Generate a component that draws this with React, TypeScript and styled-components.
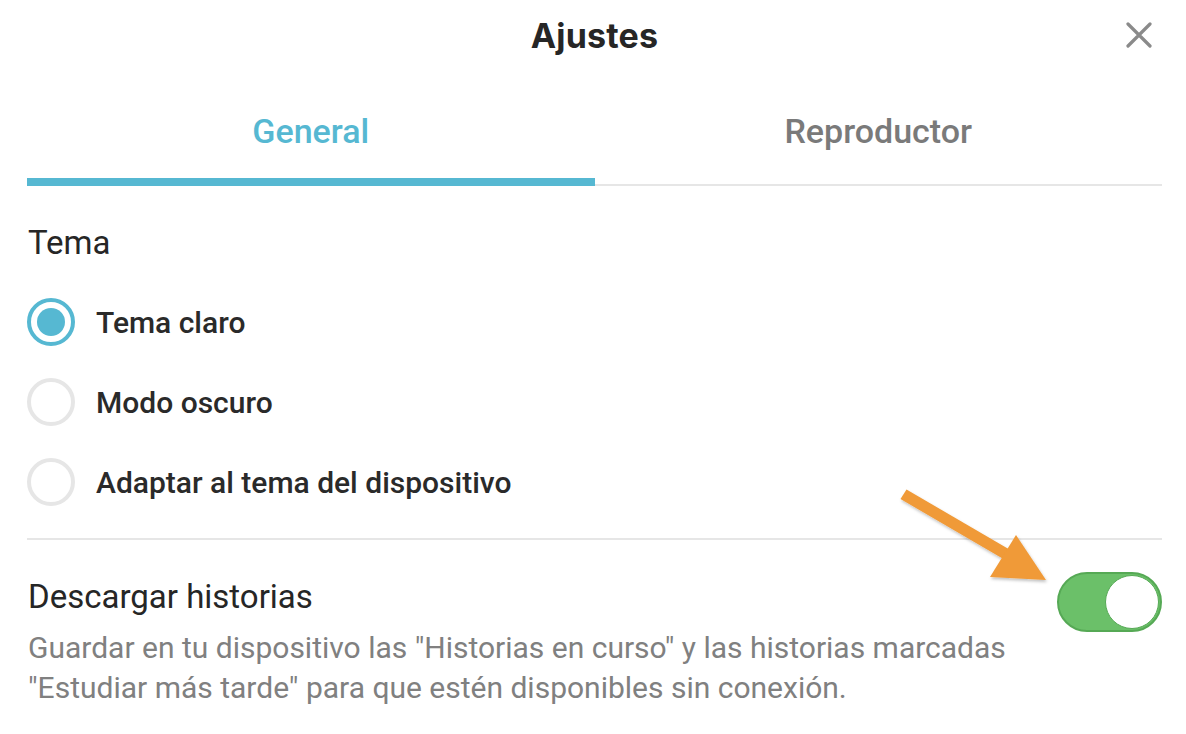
import React, { useState } from 'react';
import styled, { createGlobalStyle } from 'styled-components';

const GlobalStyle = createGlobalStyle`
  body {
    margin: 0;
    background: #ffffff;
    font-family: Roboto, "Liberation Sans", sans-serif;
    color: #262626;
  }
`;

const Page = styled.div`
  position: relative;
  width: 1186px;
  height: 734px;
  box-sizing: border-box;
  padding: 0 24px 0 27px;
  overflow: hidden;
`;

const Header = styled.header`
  display: grid;
  grid-template-columns: 1fr auto 1fr;
  align-items: center;
  height: 70px;
`;

const Title = styled.h1`
  grid-column: 2;
  margin: 0;
  font-family: Inter, "Noto Sans", sans-serif;
  font-weight: 700;
  font-size: 34px;
  letter-spacing: 0.2px;
  color: #262626;
`;

const CloseButton = styled.button`
  grid-column: 3;
  justify-self: end;
  margin-right: 8px;
  width: 30px;
  height: 30px;
  padding: 0;
  border: none;
  background: none;
  display: flex;
  align-items: center;
  justify-content: center;
  cursor: pointer;
`;

const TabBar = styled.nav`
  display: flex;
  align-items: flex-start;
`;

const Tab = styled.div<{ $active: boolean }>`
  flex: 1;
  height: 116px;
  box-sizing: border-box;
  padding-top: 40px;
  border-bottom: ${({ $active }) => ($active ? '8px solid #56b8d2' : '2px solid #e6e6e6')};
  text-align: center;
  font-size: 34px;
  line-height: 42px;
  font-weight: 500;
  color: ${({ $active }) => ($active ? '#56b8d2' : '#7a7a7a')};
  cursor: pointer;
`;

const SectionTitle = styled.h2`
  margin: 37px 0 0 1px;
  font-size: 33px;
  line-height: 40px;
  font-weight: 400;
  color: #262626;
`;

const RadioList = styled.div`
  display: flex;
  flex-direction: column;
  margin-top: 19px;
`;

const RadioRow = styled.label`
  display: flex;
  align-items: center;
  height: 80px;
  gap: 21px;
  cursor: pointer;
`;

const RadioCircle = styled.span<{ $checked: boolean }>`
  width: 48px;
  height: 48px;
  box-sizing: border-box;
  border-radius: 50%;
  border: 4px solid ${({ $checked }) => ($checked ? '#56b8d2' : '#e6e6e6')};
  display: flex;
  align-items: center;
  justify-content: center;
  &::after {
    content: '';
    width: 28px;
    height: 28px;
    border-radius: 50%;
    background: ${({ $checked }) => ($checked ? '#56b8d2' : 'transparent')};
  }
`;

const RadioLabel = styled.span`
  font-size: 30px;
  font-weight: 500;
  color: #2a2a2a;
`;

const Divider = styled.hr`
  margin: 16px 0 0;
  border: none;
  border-top: 2px solid #e6e6e6;
`;

const SettingRow = styled.div`
  display: flex;
  align-items: flex-start;
  justify-content: space-between;
`;

const SettingText = styled.div`
  padding-top: 37px;
`;

const SettingTitle = styled.div`
  font-size: 33px;
  line-height: 40px;
  color: #262626;
  margin-left: 1px;
`;

const SettingDesc = styled.p`
  margin: 11px 0 0 1px;
  max-width: 1000px;
  font-size: 30px;
  line-height: 40px;
  color: #808080;
`;

const Toggle = styled.button<{ $on: boolean }>`
  margin-top: 32px;
  width: 105px;
  height: 60px;
  box-sizing: border-box;
  padding: 0;
  border-radius: 30px;
  border: 2px solid ${({ $on }) => ($on ? '#56a955' : '#dcdcdc')};
  background: ${({ $on }) => ($on ? '#6bc069' : '#ffffff')};
  display: flex;
  align-items: center;
  justify-content: ${({ $on }) => ($on ? 'flex-end' : 'flex-start')};
  cursor: pointer;
  flex-shrink: 0;
`;

const Knob = styled.span`
  width: 54px;
  height: 54px;
  margin: 0 1px;
  border-radius: 50%;
  background: #ffffff;
  border: 1px solid #56a955;
  box-sizing: border-box;
`;

const ArrowOverlay = styled.svg`
  position: absolute;
  left: 0;
  top: 0;
  pointer-events: none;
`;

const themes = ['Tema claro', 'Modo oscuro', 'Adaptar al tema del dispositivo'];

const App: React.FC = () => {
  const [tab, setTab] = useState(0);
  const [theme, setTheme] = useState(0);
  const [download, setDownload] = useState(true);

  return (
    <>
      <GlobalStyle />
      <Page>
        <Header>
          <Title>Ajustes</Title>
          <CloseButton aria-label="Cerrar">
            <svg width="26" height="26" viewBox="0 0 26 26">
              <path d="M2 2 L24 24 M24 2 L2 24" stroke="#8a8a8a" strokeWidth="3.2" strokeLinecap="round" />
            </svg>
          </CloseButton>
        </Header>

        <TabBar role="tablist">
          <Tab role="tab" $active={tab === 0} onClick={() => setTab(0)}>General</Tab>
          <Tab role="tab" $active={tab === 1} onClick={() => setTab(1)}>Reproductor</Tab>
        </TabBar>

        <SectionTitle>Tema</SectionTitle>
        <RadioList>
          {themes.map((t, i) => (
            <RadioRow key={t} onClick={() => setTheme(i)}>
              <RadioCircle $checked={theme === i} />
              <RadioLabel>{t}</RadioLabel>
            </RadioRow>
          ))}
        </RadioList>

        <Divider />

        <SettingRow>
          <SettingText>
            <SettingTitle>Descargar historias</SettingTitle>
            <SettingDesc>
              Guardar en tu dispositivo las "Historias en curso" y las historias marcadas "Estudiar más tarde" para que estén disponibles sin conexión.
            </SettingDesc>
          </SettingText>
          <Toggle $on={download} onClick={() => setDownload(!download)} aria-label="Descargar historias">
            <Knob />
          </Toggle>
        </SettingRow>

        <ArrowOverlay width="1186" height="734" viewBox="0 0 1186 734">
          <defs>
            <filter id="arrowShadow" x="-20%" y="-20%" width="140%" height="140%">
              <feDropShadow dx="1" dy="2" stdDeviation="1.5" floodColor="#000" floodOpacity="0.25" />
            </filter>
          </defs>
          <g filter="url(#arrowShadow)" fill="#f09a37">
            <path d="M900.5 499 L906.5 489.5 L1012 551 L1006 560.5 Z" />
            <path d="M1016 535 L1046 580 L990 577 Z" />
          </g>
        </ArrowOverlay>
      </Page>
    </>
  );
};

export default App;
